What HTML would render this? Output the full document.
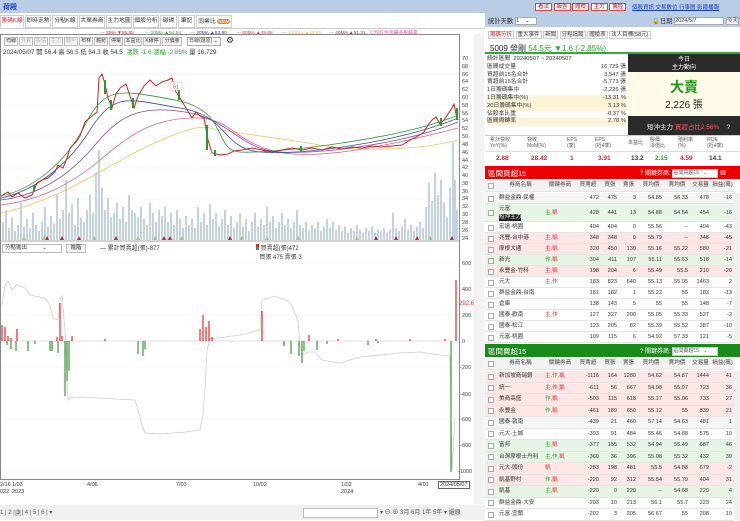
<!DOCTYPE html>
<html><head><meta charset="utf-8"><style>
*{margin:0;padding:0;box-sizing:border-box}
body{width:740px;height:520px;overflow:hidden;background:#fff;font-family:"Liberation Sans","Noto Sans CJK TC",sans-serif;font-size:7px;color:#333;position:relative}
.a{position:absolute;white-space:nowrap}
.tab{position:absolute;top:15px;height:13px;border:1px solid #ccc;background:#fff;font-size:5.8px;line-height:11px;text-align:center;overflow:hidden;white-space:nowrap}
.btn{position:absolute;top:37px;height:9px;width:14px;border:1px solid #bbb;background:#f4f4f4;font-size:5px;line-height:7px;text-align:center;overflow:hidden}
.tr{position:absolute;left:485px;width:249px;height:11px;border-bottom:1px solid #e4e4e4;font-size:5.6px;line-height:11px;overflow:hidden;white-space:nowrap}
.tr span{position:absolute;top:0;text-align:right;white-space:nowrap}
.hd{background:#f2f2f2;color:#444}
.hd span{text-align:center}
.cb{position:absolute;left:3px;top:3px;width:6px;height:6px;border:1px solid #aaa;background:#fff}
.pk{background:#fde6e6}.gn{background:#e6f5e6}.gy{background:#f5f5f5}
</style></head><body>
<div class="a" style="left:0;top:0;width:740px;height:13px;background:#b9cde6"></div>
<div class="a" style="left:3px;top:2px;color:#1a3fc0;font-size:7px;font-weight:bold">荷殿</div>
<div class="a" style="left:535px;top:2px;font-size:5.5px">
<span style="border:1px solid #d44;color:#c00;background:#fff;padding:0 2px">看法</span> <span style="border:1px solid #d44;color:#c00;background:#fff;padding:0 2px">報告</span> <span style="border:1px solid #d44;color:#c00;background:#fff;padding:0 2px">體檢</span> <span style="border:1px solid #d44;color:#c00;background:#fff;padding:0 2px">主力</span> <span style="border:1px solid #d44;color:#c00;background:#fff;padding:0 2px">籌控</span></div>
<div class="a" style="left:632px;top:3px;font-size:5.5px;color:#1a3fc0;text-decoration:underline">個股資訊 交易數位 行事曆 影邊播報</div>
<div class="tab" style="left:0;width:24px;color:#d22;border-bottom-color:#fff">籌碼K線</div>
<div class="tab" style="left:25px;width:26px">即時走勢</div>
<div class="tab" style="left:52px;width:26px">分點K線</div>
<div class="tab" style="left:79px;width:26px">大單券商</div>
<div class="tab" style="left:106px;width:26px">主力地圖</div>
<div class="tab" style="left:133px;width:26px">個股分析</div>
<div class="tab" style="left:160px;width:17px">磁碟</div>
<div class="tab" style="left:178px;width:17px">筆記</div>
<div class="tab" style="left:196px;width:36px">同業比 <span style="background:#f08030;color:#fff;border-radius:4px;padding:0 1px;font-size:4.5px">NEW</span></div>
<div class="a" style="left:0;top:28px;width:485px;height:1px;background:#ccc"></div>
<div class="a" style="left:100px;top:29px;font-size:4.8px;color:#888">— <span style="color:#d22">5MA ▼55.88</span> &nbsp;&nbsp;&nbsp;&nbsp;&nbsp;&nbsp;&nbsp;— <span style="color:#2a2">10MA ▲54.54</span> &nbsp;&nbsp;&nbsp;&nbsp;&nbsp;&nbsp;— <span style="color:#33a">20MA ▲53.80</span> &nbsp;&nbsp;&nbsp;&nbsp;&nbsp;&nbsp;— <span style="color:#d33">60MA ▲49.98</span> &nbsp;&nbsp;&nbsp;&nbsp;&nbsp;&nbsp;— <span style="color:#eb5">120MA ▲49.99</span> &nbsp;&nbsp;&nbsp;&nbsp;&nbsp;— <span style="color:#a26">40MA ▲51.31</span> &nbsp;&nbsp;<span style="color:#e5a">⊙均紅色皆屬多單歸累</span></div>
<div class="a" style="left:0;top:34px;width:460px;height:1px;background:#888"></div>
<div class="a" style="left:0;top:34px;width:1px;height:446px;background:#888"></div>
<div class="a" style="left:459px;top:34px;width:1px;height:446px;background:#888"></div>
<div class="a" style="left:0;top:479px;width:460px;height:1px;background:#888"></div>
<div class="btn" style="left:4px">均線</div><div class="btn" style="left:19px;color:#aaa">外資</div><div class="btn" style="left:34px;color:#aaa">投信</div><div class="btn" style="left:49px;color:#aaa">主力</div><div class="btn" style="left:64px;color:#aaa">散戶</div><div class="btn" style="left:79px">布林</div><div class="btn" style="left:94px">趨勢</div><div class="btn" style="left:109px">停電</div><div class="btn" style="left:124px;width:18px">本益比</div><div class="btn" style="left:143px;width:18px">K線停</div><div class="btn" style="left:162px;width:20px">分價量</div>
<div class="a" style="left:187px;top:37px;width:34px;height:9px;border:1px solid #aaa;font-size:5px;line-height:7px;padding-left:1px">日線(還原) ⌄</div>
<div class="a" style="left:226px;top:35px;font-size:9px">⚙</div>
<div class="a" style="left:3px;top:47px;font-size:6.3px">2024/05/07 開 56.4 高 56.5 低 54.3 收 54.5 &nbsp;<span style="color:#2a2">漲跌 -1.6 漲幅 -2.85%</span> 量 16,729</div>
<svg class="a" style="left:0;top:0" width="485" height="520">
<g stroke="#eee" stroke-width="0.6">
<line x1="1" x2="459" y1="74" y2="74"/><line x1="1" x2="459" y1="105" y2="105"/><line x1="1" x2="459" y1="136" y2="136"/><line x1="1" x2="459" y1="168" y2="168"/><line x1="1" x2="459" y1="199" y2="199"/>
<line x1="1" x2="459" y1="263" y2="263"/><line x1="1" x2="459" y1="315" y2="315"/><line x1="1" x2="459" y1="367" y2="367"/><line x1="1" x2="459" y1="419" y2="419"/><line x1="1" x2="459" y1="471" y2="471"/>
</g>
<g stroke="#a9bfd6" stroke-width="1.4" transform="translate(0,240) scale(1,1.5) translate(0,-240)">
<path d="M3 240v-12M6 240v-20M9 240v-8M12 240v-15M15 240v-6M18 240v-10M21 240v-25M24 240v-9M27 240v-14M30 240v-8M33 240v-18M36 240v-10M39 240v-6M42 240v-12M45 240v-22M48 240v-9M51 240v-16M54 240v-11M57 240v-30M60 240v-14M63 240v-20M66 240v-40M69 240v-18M72 240v-24M75 240v-10M78 240v-28M81 240v-15M84 240v-12M87 240v-20M90 240v-30M93 240v-18M96 240v-45M99 240v-60M102 240v-35M105 240v-20M108 240v-28M111 240v-15M114 240v-18M117 240v-25M120 240v-14M123 240v-22M126 240v-12M129 240v-30M132 240v-20M135 240v-18M138 240v-15M141 240v-22M144 240v-14M147 240v-10M150 240v-25M153 240v-18M156 240v-12M159 240v-20M162 240v-16M165 240v-22M168 240v-12M171 240v-18M174 240v-10M177 240v-20M180 240v-14M183 240v-8M186 240v-16M189 240v-10M192 240v-14M195 240v-8M198 240v-22M201 240v-12M204 240v-18M207 240v-10M210 240v-24M213 240v-14M216 240v-18M219 240v-9M222 240v-14M225 240v-20M228 240v-10M231 240v-16M234 240v-8M237 240v-12M240 240v-18M243 240v-9M246 240v-14M249 240v-6M252 240v-12M255 240v-18M258 240v-9M261 240v-14M264 240v-10M267 240v-22M270 240v-12M273 240v-16M276 240v-8M279 240v-12M282 240v-18M285 240v-10M288 240v-14M291 240v-8M294 240v-12M297 240v-20M300 240v-10M303 240v-8M306 240v-12M309 240v-6M312 240v-10M315 240v-8M318 240v-12M321 240v-6M324 240v-9M327 240v-14M330 240v-8M333 240v-12M336 240v-7M339 240v-10M342 240v-6M345 240v-9M348 240v-5M351 240v-8M354 240v-6M357 240v-10M360 240v-7M363 240v-5M366 240v-8M369 240v-6M372 240v-9M375 240v-5M378 240v-7M381 240v-6M384 240v-8M387 240v-5M390 240v-7M393 240v-18M396 240v-8M399 240v-6M402 240v-9M405 240v-14M408 240v-7M411 240v-10M414 240v-6M417 240v-9M420 240v-12M423 240v-8M426 240v-22M429 240v-38M432 240v-26M435 240v-45M438 240v-30M441 240v-40M444 240v-25M447 240v-15M450 240v-35M453 240v-65M455 240v-40M457 240v-20"/>
</g>
<g fill="none" stroke-width="0.8">
<path stroke="#f2c060" d="M1 213 C60 200 100 170 140 150 S200 125 210 128 S280 138 320 145 S420 150 458 140"/>
<path stroke="#e06080" d="M1 205 C40 200 70 185 100 160 S150 120 190 118 S230 138 270 150 S380 148 458 128"/>
<path stroke="#8a4aa0" d="M1 200 C40 195 70 175 95 145 S140 105 185 112 S240 150 280 152 S400 145 458 122"/>
<path stroke="#3050b0" d="M1 198 C30 192 65 170 90 130 S130 100 180 108 S220 148 260 152 S400 142 458 118"/>
<path stroke="#2a9a2a" d="M1 196 C30 190 65 165 85 125 S120 90 175 100 S212 150 240 152 S400 140 458 115"/>
</g>
<path fill="none" stroke="#c22" stroke-width="1" d="M1 196 L8 192 12 197 18 193 25 198 32 195 37 183 42 180 48 178 55 172 58 165 63 168 67 158 70 148 76 142 80 136 85 122 92 116 97 112 99 78 102 74 105 84 108 98 112 108 116 94 120 88 126 84 130 96 134 108 138 96 144 86 150 80 156 86 162 82 168 80 172 78 176 92 180 98 186 108 192 118 196 112 200 116 204 118 208 140 212 153 220 155 228 154 234 151 242 150 252 148 262 150 272 152 282 150 292 148 302 150 312 148 322 150 332 147 342 149 352 147 362 148 372 146 382 147 392 146 402 145 410 140 418 136 424 132 428 125 432 120 436 117 440 124 444 120 448 114 452 108 454 104 456 114 458 120"/>
<g fill="#2a9a2a"><rect x="33" y="185" width="2" height="6"/><rect x="104" y="80" width="2" height="14"/><rect x="110" y="100" width="2" height="10"/><rect x="132" y="98" width="2" height="10"/><rect x="178" y="90" width="2" height="10"/><rect x="206" y="125" width="2" height="25"/><rect x="214" y="150" width="2" height="6"/><rect x="300" y="146" width="2" height="5"/><rect x="440" y="118" width="2" height="8"/><rect x="456" y="108" width="2" height="12"/></g>
<rect x="170" y="82" width="12" height="8" fill="#fff" stroke="#e9a" stroke-width="0.5"/><text x="173" y="88.5" font-size="5.5" fill="#c44">61</text>
<g font-size="5.5" fill="#444" font-family="Liberation Sans">
<text x="462" y="60">70</text><text x="462" y="68">68</text><text x="462" y="76">66</text><text x="462" y="83">64</text><text x="462" y="91">62</text><text x="462" y="99">60</text><text x="462" y="107">58</text><text x="462" y="115">56</text><text x="462" y="122">54</text><text x="462" y="130">52</text><text x="462" y="138">50</text><text x="462" y="146">48</text><text x="462" y="154">46</text><text x="462" y="162">44</text><text x="462" y="169">42</text><text x="462" y="177">40</text><text x="462" y="185">38</text><text x="462" y="193">36</text><text x="462" y="200">34</text><text x="462" y="208">32</text><text x="462" y="216">30</text><text x="462" y="224">28</text><text x="462" y="232">26</text><text x="462" y="240">24</text>
<text x="462" y="265">600</text><text x="462" y="291">400</text><text x="462" y="317">200</text><text x="462" y="343">0</text><text x="460" y="369">-200</text><text x="460" y="396">-400</text><text x="460" y="421">-600</text><text x="460" y="447">-800</text><text x="458" y="473">-1000</text>
</g>
<text x="459" y="305" font-size="6" fill="#c33" font-family="Liberation Sans">292.65</text>
<line x1="1" x2="459" y1="241" y2="241" stroke="#888" stroke-width="0.8"/>
<g fill="#c22"><path d="M45 240l2-4 2 4zM60 240l2-4 2 4zM77 240l2-4 2 4zM114 240l2-4 2 4zM162 240l2-4 2 4zM168 240l2-4 2 4zM374 240l2-4 2 4zM394 240l2-4 2 4zM415 240l2-4 2 4zM450 240l2-4 2 4zM228 240l2-4 2 4z"/></g>
<g fill="#9c6"><path d="M22 240l2-4 2 4zM42 240l2-4 2 4zM92 240l2-4 2 4zM136 240l2-4 2 4zM153 240l2-4 2 4zM180 240l2-4 2 4zM240 240l2-4 2 4zM265 240l2-4 2 4zM296 240l2-4 2 4zM355 240l2-4 2 4zM428 240l2-4 2 4z"/></g>
<line x1="1" x2="459" y1="341" y2="341" stroke="#bbb" stroke-width="0.5"/>
<path fill="none" stroke="#ccc" stroke-width="0.8" d="M2 305 L5 285 8 281 12 290 17 285 25 288 30 295 45 298 50 305 53 318 58 320 60 300 62 296 65 330 68 400 70 398 80 397 135 400 138 410 142 425 145 433 160 434 185 432 200 430 203 415 205 390 207 350 210 339 240 335 260 330 262 300 275 296 290 302 298 320 300 345 303 355 308 352 315 352 322 360 340 363 360 357 400 353 420 352 440 355 450 356 452 470 455 418"/>
<g stroke="#e22" stroke-width="1.2"><path d="M2 341v-16M5 341v-14M8 341v-5M11 341v-3M17 341v-12M57 341v-4M60 341v-38M62 341v-5M72 341v-5M105 341v-2M200 341v-12M203 341v-26M206 341v-14M209 341v-20M212 341v-4M262 341v-30M309 341v-6M338 341v-2M376 341v-2M410 341v-2M445 341v-2M456 341v-61"/></g>
<g stroke="#3a9a3a" stroke-width="1.2"><path d="M7 341v4M11 341v8M16 341v10M28 341v10M35 341v3M50 341v10M52 341v10M58 341v12M65 341v55M67 341v40M69 341v30M138 341v13M143 341v15M145 341v8M284 341v5M291 341v13M299 341v15M302 341v22M304 341v10M317 341v9M327 341v3M368 341v4M378 341v2M451 341v131"/></g>
</svg>
<div class="a" style="left:2px;top:244px;width:60px;height:9px;border:1px solid #bbb;font-size:5.5px;line-height:7px;padding-left:2px">分點進出 &nbsp;&nbsp;&nbsp;&nbsp;&nbsp;&nbsp;&nbsp;&nbsp;&nbsp;⌄</div>
<div class="a" style="left:66px;top:244px;width:20px;height:9px;border:1px solid #bbb;background:#f4f4f4;font-size:5.5px;line-height:7px;text-align:center">進階</div>
<div class="a" style="left:100px;top:243px;font-size:6px">— 累計買賣超(張)-877</div>
<div class="a" style="left:256px;top:243px;font-size:6px"><span style="display:inline-block;width:3px;height:6px;background:linear-gradient(#e22 50%,#2a2 50%)"></span> 買賣超(張)472<br>&nbsp;&nbsp;買張 475 賣張 3</div>
<div class="a" style="left:474px;top:34px;width:10px;height:470px;background:#f2f2f2"></div>
<div class="a" style="left:0;top:482px;font-size:5.5px;line-height:7px">2/16<br>022</div>
<div class="a" style="left:12px;top:482px;font-size:5.5px;line-height:7px">1/03<br>2023</div>
<div class="a" style="left:87px;top:482px;font-size:5.5px">4/06</div>
<div class="a" style="left:176px;top:482px;font-size:5.5px">7/03</div>
<div class="a" style="left:253px;top:482px;font-size:5.5px">10/02</div>
<div class="a" style="left:341px;top:482px;font-size:5.5px;line-height:7px">1/02<br>2024</div>
<div class="a" style="left:418px;top:482px;font-size:5.5px">4/01</div>
<div class="a" style="left:438px;top:481px;font-size:5.5px;border:1px solid #666;background:#fff;padding:0 1px">2024/05/07</div>
<div class="a" style="left:0;top:505px;width:485px;height:15px;background:#f0f0f0"></div>
<div class="a" style="left:0;top:509px;font-size:6px;color:#555">1 | 2 |<span style="background:#ccc"> 3 </span>| 4 | 5 | 6 | ▾</div>
<div class="a" style="left:303px;top:508px;width:75px;height:10px;border:1px solid #bbb;background:#fff"></div>
<div class="a" style="left:380px;top:507px;font-size:6px;color:#555">▾ ⊖ ⊕ 3月 6月 1年 5年 ▾ <span style="background:#ddd">還原</span></div>
<div class="a" style="left:485px;top:13px;width:255px;height:14px;background:#b9cde6"></div>
<div class="a" style="left:488px;top:16px;font-size:6.3px">統計天數 <span style="display:inline-block;width:22px;height:8px;background:#fff;border:1px solid #aaa;font-size:5.5px;line-height:6px;vertical-align:middle">1 &nbsp;&nbsp;&nbsp;⌄</span></div>
<div class="a" style="left:652px;top:16px;font-size:6.3px">🔒日期 <span style="display:inline-block;width:50px;height:8px;background:#fff;border:1px solid #aaa;font-size:5.5px;line-height:6px;vertical-align:middle">2024/5/7</span> <span style="display:inline-block;height:8px;background:#fff;border:1px solid #aaa;font-size:5.5px;line-height:6px;vertical-align:middle">今天</span></div>
<div class="a" style="left:488px;top:30px;font-size:5.5px"><span style="border:1px solid #ccc;color:#d22;padding:0 1px">籌碼分析</span> <span style="border:1px solid #ccc;padding:0 1px">重大事件</span> <span style="border:1px solid #ccc;padding:0 1px">新聞</span> <span style="border:1px solid #ccc;padding:0 1px">分點追蹤</span> <span style="border:1px solid #ccc;padding:0 1px">體檢表</span> <span style="border:1px solid #ccc;padding:0 1px">法人目標(58元)</span></div>
<div class="a" style="left:490px;top:43px;font-size:8px;color:#222">5009 榮剛 <span style="color:#2a2">54.5元 ▼1.6 (-2.85%)</span></div>
<div class="a" style="left:485px;top:52px;width:255px;height:2px;background:#3a3"></div>
<div class="a" style="left:628px;top:54px;width:112px;height:81px;background:#2b2b2b"></div>
<div class="a" style="left:628px;top:56px;width:112px;text-align:center;color:#fff;font-size:6px;line-height:8px">今日<br>主力動向</div>
<div class="a" style="left:628px;top:72px;width:112px;height:44px;background:#fffbe8"></div>
<div class="a" style="left:628px;top:77px;width:112px;text-align:center;color:#1a9a1a;font-size:14px;font-weight:bold">大賣</div>
<div class="a" style="left:628px;top:96px;width:112px;text-align:center;font-size:10px;color:#222">2,226 張</div>
<div class="a" style="left:647px;top:121px;color:#eee;font-size:6.5px">短沖主力 <span style="color:#f55">買超占比2.56%</span> &nbsp;&nbsp;&nbsp;?</div>
<div class="a" style="left:487px;top:56px;font-size:5.8px;line-height:7.8px;width:139px">
<div>統計區間 &nbsp;20240507 ~ 20240507</div>
<div>區間成交量<span style="float:right">16,729 張</span></div>
<div>買超前15名合計<span style="float:right">3,547 張</span></div>
<div>賣超前15名合計<span style="float:right">-5,773 張</span></div>
<div>1日籌碼集中<span style="float:right">-2,226 張</span></div>
<div style="background:#fdf3d8">1日籌碼集中(%)<span style="float:right">-13.31 %</span></div>
<div style="background:#fdf3d8">20日籌碼集中(%)<span style="float:right">3.13 %</span></div>
<div>佔股本比重<span style="float:right">-0.37 %</span></div>
<div style="background:#fdf3d8">區間周轉率<span style="float:right">2.78 %</span></div></div>
<div class="a" style="left:485px;top:135px;width:255px;height:1px;background:#ccc"></div>
<div class="a" style="left:485px;top:137px;width:255px;font-size:5px;color:#555;line-height:6px">
<span class="a" style="left:5px">累計營收<br>YoY(%)</span><span class="a" style="left:42px">營收<br>MoM(%)</span><span class="a" style="left:82px">EPS<br>(季)</span><span class="a" style="left:110px">EPS<br>(近4季)</span><span class="a" style="left:143px;top:3px">本益比</span><span class="a" style="left:165px">股價<br>淨值比</span><span class="a" style="left:193px">殖利率<br>(%)</span><span class="a" style="left:222px">ROE<br>(近4季)</span></div>
<div class="a" style="left:485px;top:151px;width:255px;height:1px;background:#ddd"></div>
<div class="a" style="left:485px;top:155px;width:255px;font-size:6.5px;font-weight:bold">
<span class="a" style="left:11px;color:#d22">2.88</span><span class="a" style="left:46px;color:#d22">28.42</span><span class="a" style="left:85px;color:#d22">1</span><span class="a" style="left:113px;color:#d22">3.91</span><span class="a" style="left:146px">13.2</span><span class="a" style="left:170px;color:#2a2">2.15</span><span class="a" style="left:195px;color:#d22">4.59</span><span class="a" style="left:224px">14.1</span></div>
<div class="a" style="left:485px;top:166px;width:255px;height:13px;background:#e00"></div>
<div class="a" style="left:488px;top:168px;color:#fff;font-size:7.5px">區間買超15</div>
<div class="a" style="left:640px;top:168px;color:#fff;font-size:6px">? 關鍵券商: <span style="display:inline-block;width:46px;height:9px;background:#fff;color:#555;border:1px solid #ccc;vertical-align:middle;font-size:5px;line-height:7px">區間買超15 &nbsp;&nbsp;⌄</span> ▦</div>
<div id="t"></div>
<div class="a" style="left:485px;top:344px;width:255px;height:13px;background:#1a8a1a"></div>
<div class="a" style="left:488px;top:346px;color:#fff;font-size:7.5px">區間賣超15</div>
<div class="a" style="left:640px;top:346px;color:#fff;font-size:6px">? 關鍵券商: <span style="display:inline-block;width:46px;height:9px;background:#fff;color:#555;border:1px solid #ccc;vertical-align:middle;font-size:5px;line-height:7px">區間賣超15 &nbsp;&nbsp;⌄</span></div>
<div class="a" style="left:734px;top:193px;width:6px;height:150px;background:#f0f0f0"></div>
<div class="a" style="left:734px;top:371px;width:6px;height:149px;background:#f0f0f0"></div>
<script>
function rows(top,data,cls,rh){var h='';var y=top;
h+='<div class="tr hd" style="top:'+y+'px;height:12px"><div class="cb"></div><span style="left:11px;width:49px">券商名稱</span><span style="left:60px;width:30px">關鍵券商</span><span style="left:90px;width:26px">買賣超</span><span style="left:116px;width:18px">買張</span><span style="left:134px;width:19px">賣張</span><span style="left:153px;width:26px">買均價</span><span style="left:179px;width:26px">賣均價</span><span style="left:205px;width:21px">交易量</span><span style="left:226px;width:23px">損益(萬)</span></div>';
y+=13;
data.forEach(function(r,i){var hh=r[11]||rh;var tag=r[1].replace(/凱/g,'<b style="color:#e22;font-weight:normal">凱</b>');
h+='<div class="tr '+cls[i]+'" style="top:'+y+'px;height:'+hh+'px;line-height:'+hh+'px"><div class="cb" style="top:'+(hh/2-3)+'px"></div><span style="left:14px;text-align:left;line-height:'+(hh>12?'8px':hh+'px')+(hh>12?';top:1px':'')+'">'+r[0]+'</span><span style="left:60px;width:28px;text-align:left;color:'+r[10]+'">'+tag+'</span><span style="left:90px;width:24px">'+r[2]+'</span><span style="left:116px;width:16px">'+r[3]+'</span><span style="left:134px;width:17px">'+r[4]+'</span><span style="left:153px;width:24px">'+r[5]+'</span><span style="left:179px;width:24px">'+r[6]+'</span><span style="left:205px;width:19px">'+r[7]+'</span><span style="left:226px;width:21px">'+r[8]+'</span></div>';y+=hh;});
return h;}
var G='#2a2',R='#e22';
var buy=[['群益金鼎-民權','','472','475','3','54.85','56.33','478','-16',0,G],
['元富<span style="left:0;top:9px;background:#222;color:#fff;line-height:7px">短沖主力</span>','主,凱','428','441','13','54.88','54.54','454','-16',0,G,18],
['宏遠-桃園','','404','404','0','55.56','--','404','-43',0,G],
['兆豐-台中港','主,凱','348','348','0','55.79','--','348','-45',0,R],
['摩根大通','主,凱','320','450','130','55.16','55.22','580','-21',0,R],
['新光','作,凱','304','411','107','55.11','55.63','518','-14',0,G],
['永豐金-竹科','主,凱','198','204','6','55.49','55.5','210','-20',0,R],
['元大','主,作','183','823','640','55.13','55.05','1463','2',0,R],
['群益金鼎-台南','','181','182','1','55.22','55','183','-13',0,G],
['倉庫','','138','143','5','55','55','148','-7',0,G],
['國泰-歡南','主,作','127','327','200','55.05','55.33','527','-2',0,R],
['國泰-松江','','123','205','82','55.39','55.52','287','-10',0,G],
['元富-桃園','','109','115','6','54.92','57.33','121','-5',0,G]];
var sell=[['新加坡商瑞銀','主,作,凱','-1116','164','1280','54.62','54.87','1444','41',0,G],
['統一','主,作,凱','-611','56','667','54.98','55.07','723','36',0,R],
['美商高盛','作,凱','-503','115','618','55.17','55.06','733','27',0,G],
['永豐金','作,凱','-461','189','650','55.12','55','839','21',0,G],
['國泰-敦南','','-439','21','460','57.14','54.63','481','1',0,G],
['元大-土城','','-393','91','484','55.46','54.88','575','10',0,G],
['富邦','主,凱','-377','155','532','54.94','55.49','687','46',0,G],
['台灣摩根士丹利','主,作,凱','-360','36','396','55.08','55.32','432','30',0,G],
['元大-頭份','凱','-283','198','481','55.5','54.88','679','-2',0,G],
['凱基野村','作,凱','-220','92','312','55.54','55.79','404','31',0,G],
['凱基','主,凱','-220','0','220','--','54.68','220','4',0,G],
['群益金鼎-大安','','-203','10','213','56.1','55.7','223','24',0,G],
['元富-宜蘭','','-202','3','205','56.67','55','208','10',0,G]];
document.getElementById('t').innerHTML=rows(180,buy,['gy','gn','','pk','pk','gn','pk','','','','','',''],11)+rows(358,sell,['pk','pk','pk','pk','gy','','gn','gn','pk','pk','gn','',''],11.5);
</script>
</body></html>
